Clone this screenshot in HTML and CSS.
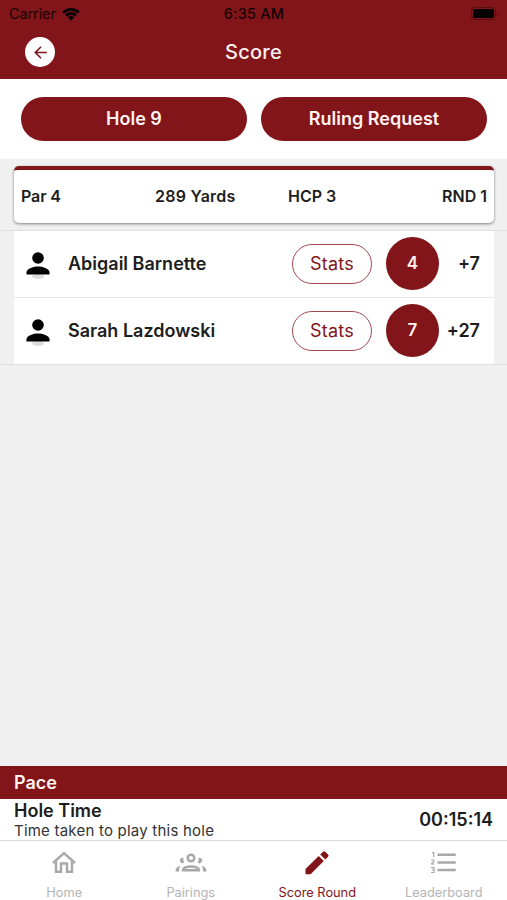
FILE: index.html
```html
<!DOCTYPE html>
<html lang="en">
<head>
<meta charset="utf-8">
<title>Score</title>
<link rel="stylesheet" href="styles.css">
</head>
<body>
<div class="app">
  <header class="header">
    <div class="status">
      <div class="carrier"><span>Carrier</span>
        <svg class="wifi" viewBox="0 0 18 14"><path d="M9 13.6 6 10.5a4.3 4.3 0 0 1 6 0zM5 9.5 3.1 7.5a8.4 8.4 0 0 1 11.8 0L13 9.5a5.8 5.8 0 0 0-8 0zM2.1 6.5.3 4.6a12.4 12.4 0 0 1 17.4 0l-1.8 1.9a9.9 9.9 0 0 0-13.8 0z"/></svg>
      </div>
      <time class="clock">6:35 AM</time>
      <svg class="battery" viewBox="0 0 28 13"><rect class="shell" x=".5" y=".5" width="24" height="12" rx="3.5"/><rect x="2" y="2" width="21" height="9" rx="2"/><path class="tip" d="M26 4.5q1.3.6 1.3 2T26 8.5z"/></svg>
    </div>
    <div class="navbar">
      <button class="back" aria-label="Back"><svg viewBox="0 0 24 24"><path d="M20 11H7.83l5.59-5.59L12 4l-8 8 8 8 1.41-1.41L7.83 13H20z"/></svg></button>
      <h1 class="title">Score</h1>
    </div>
  </header>
  <div class="actions">
    <button class="action"><span class="hole">Hole 9</span></button>
    <button class="action"><span class="ruling">Ruling Request</span></button>
  </div>
  <main class="content">
    <section class="info">
      <span class="par">Par 4</span><span class="yards">289 Yards</span><span class="hcp">HCP 3</span><span class="rnd">RND 1</span>
    </section>
    <div class="players">
      <div class="player">
        <svg class="avatar" viewBox="0 0 24 28"><ellipse class="shade" cx="12" cy="24.5" rx="6" ry="2.5"/><circle cx="12" cy="6" r="5.8"/><path d="M.5 22.5v-2.2c0-3.8 7.7-5.8 11.5-5.8s11.5 2 11.5 5.8v2.2z"/></svg>
        <span class="name">Abigail Barnette</span>
        <button class="stats">Stats</button><span class="score">4</span><span class="total">+7</span>
      </div>
      <div class="player">
        <svg class="avatar" viewBox="0 0 24 28"><ellipse class="shade" cx="12" cy="24.5" rx="6" ry="2.5"/><circle cx="12" cy="6" r="5.8"/><path d="M.5 22.5v-2.2c0-3.8 7.7-5.8 11.5-5.8s11.5 2 11.5 5.8v2.2z"/></svg>
        <span class="name">Sarah Lazdowski</span>
        <button class="stats">Stats</button><span class="score">7</span><span class="total">+27</span>
      </div>
    </div>
  </main>
  <h2 class="pace">Pace</h2>
  <div class="timing">
    <div class="labels"><div class="label">Hole Time</div><div class="hint">Time taken to play this hole</div></div>
    <span class="elapsed">00:15:14</span>
  </div>
  <nav class="tabs">
    <a class="tab"><svg class="icon home" viewBox="0 0 28 28"><path class="line" d="M3 14 14 4l11 10M6 12v10.8h5v-8.3h6v8.3h5V12"/></svg><span>Home</span></a>
    <a class="tab"><svg class="icon group" viewBox="0 0 32 28"><circle class="line" cx="16" cy="9" r="3.3"/><path class="line" d="M8 21.2c0-2.4 4-3.7 8-3.7s8 1.3 8 3.7z"/><path d="M8.5 8.8a2.8 2.8 0 1 0 .7 5c-.8-1.5-1-3.2-.7-5zM23.5 8.8a2.8 2.8 0 1 1-.7 5c.8-1.5 1-3.2.7-5zM.5 22.4c0-3 1.7-5 5-5.3-1.3 1.5-1.6 3.2-1.5 5.3zM31.5 22.4c0-3-1.7-5-5-5.3 1.3 1.5 1.6 3.2 1.5 5.3z"/></svg><span class="pairings">Pairings</span></a>
    <a class="tab active"><svg class="icon pencil" viewBox="0 0 28 28"><path d="M2.5 20.1v5.1h5.1L20.8 12l-5.1-5.1zM25.1 7.8a1.6 1.6 0 0 0 0-2.2l-2.9-2.9a1.6 1.6 0 0 0-2.2 0l-2.8 2.8 5.1 5.1z"/></svg><span class="round">Score Round</span></a>
    <a class="tab"><svg class="icon ranks" viewBox="0 0 28 28"><path d="M7.5 4.6h18.2v2.5H7.5zm0 7.6h18.2v2.5H7.5zm0 7.6h18.2v2.5H7.5zM2.8 3h1.5v5.2H3.1V4.3h-1V3.2zM1.2 10.5h3.3v2.1l-2 1.9h2v1.1H1.1v-1.5l2-1.9v-.6H1.2zM1.1 18.1h3.5V24H1.1v-1.1h2.3v-1.3H1.9v-1.1h1.5v-1.3H1.1z"/></svg><span class="leader">Leaderboard</span></a>
  </nav>
</div>
</body>
</html>
```
FILE: styles.css
```css
* { box-sizing: border-box; margin: 0; padding: 0; }
body { font-family: Inter, "Liberation Sans", sans-serif; color: #1d1d1d; background: #f0f0f0; }
button { font: inherit; border: 0; }
span, time, h1, h2 { white-space: nowrap; }
.app { height: 900px; display: flex; flex-direction: column; }
.header { height: 79px; flex: none; background: #811519; }
.status { height: 27px; padding: 0 8px 0 9px; display: grid; grid-template-columns: 1fr auto 1fr; align-items: center; font-size: 14.5px; color: #160305; }
.carrier { display: flex; align-items: center; gap: 6px; }
.carrier span { letter-spacing: -.1px; }
.wifi { width: 18px; height: 14px; }
.clock { font-weight: 500; letter-spacing: .2px; }
.battery { width: 28px; height: 13px; justify-self: end; }
.shell { fill: none; stroke: #5a0d10; }
.tip { fill: #5a0d10; }
.navbar { height: 50px; padding: 0 25px; display: grid; grid-template-columns: 1fr auto 1fr; align-items: center; }
.back { width: 30px; height: 30px; border-radius: 50%; background: #fff; display: grid; place-items: center; }
.back svg { width: 19px; height: 19px; fill: #811519; }
.title { font-size: 20px; font-weight: 500; letter-spacing: .3px; color: #fbeeee; }
.actions { height: 80px; flex: none; padding: 18px 20px 18px 21px; display: grid; grid-template-columns: 1fr 1fr; gap: 14px; background: #fff; }
.action { height: 44px; padding-bottom: 2px; border-radius: 22px; background: #811519; color: #fff3f1; font-size: 18px; font-weight: 600; }
.content { flex: 1; padding-top: 7px; }
.info { height: 57px; margin: 0 13px 7px 14px; padding: 0 7px 2px 7px; border-top: 4px solid #811519; border-radius: 5px; background: #fff; box-shadow: 0 1px 3px #0007; display: grid; grid-template-columns: 134px 133px 1fr auto; align-items: center; font-size: 16px; font-weight: 600; }
.yards { letter-spacing: .25px; }
.par { letter-spacing: -.1px; }
.players { border: solid #dedede; border-width: 1px 0; padding: 0 13px 0 14px; }
.player { height: 66px; background: #fff; padding: 0 14px 0 12px; display: flex; align-items: center; }
.player + .player { border-top: 1px solid #e6e6e6; height: 67px; }
.avatar { width: 24px; height: 28px; margin: 4px 18px 0 0; }
.shade { fill: #ddd; }
.name { flex: 1; padding-bottom: 2px; font-size: 18px; font-weight: 600; }
.stats { width: 80px; height: 40px; padding-bottom: 1px; border: 1px solid #a34850; border-radius: 20px; background: #fff; color: #811519; font-size: 18px; letter-spacing: .2px; margin-right: 14px; }
.score { width: 53px; height: 53px; padding-bottom: 2px; margin-bottom: 1px; border-radius: 50%; background: #811519; color: #fff3f1; display: grid; place-items: center; font-size: 17px; font-weight: 600; }
.total { width: 41px; padding-bottom: 2px; text-align: right; font-size: 18px; font-weight: 600; }
.pace { height: 33px; flex: none; padding-left: 14px; background: #811519; color: #fff3f1; font-size: 18px; font-weight: 600; line-height: 33px; }
.timing { height: 41px; flex: none; padding: 0 14px; background: #fff; display: flex; justify-content: space-between; align-items: center; }
.labels { padding-top: 1px; }
.label { font-size: 18px; font-weight: 600; line-height: 22px; }
.hint { font-size: 15px; line-height: 18px; letter-spacing: .22px; color: #333; }
.elapsed { font-size: 18px; font-weight: 600; }
.tabs { height: 60px; flex: none; padding-left: 1px; border-top: 1px solid #dadada; background: #fff; display: grid; grid-template-columns: repeat(4, 1fr); }
.tab { display: flex; flex-direction: column; align-items: center; color: #b4b4b4; font-size: 12.8px; line-height: 16px; }
.tab.active { color: #811519; }
.icon { width: 28px; height: 28px; margin: 8px 0; fill: #a8a8a8; }
.line { fill: none; stroke: #a8a8a8; stroke-width: 2.4; }
.active .icon { fill: #811519; }
.group { width: 32px; }
```
